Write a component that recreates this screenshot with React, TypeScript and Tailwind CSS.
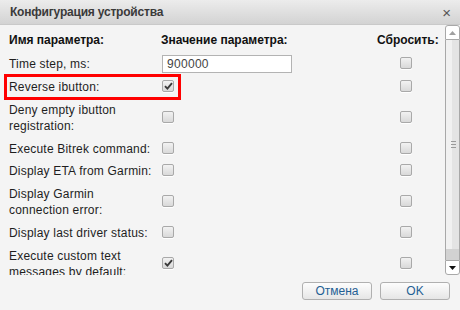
import React from "react";

type Row = { label: string; value?: string; checked?: boolean; marked?: boolean };

const rows: Row[] = [
	{ label: "Time step, ms:", value: "900000" },
	{ label: "Reverse ibutton:", checked: true, marked: true },
	{ label: "Deny empty ibutton\nregistration:" },
	{ label: "Execute Bitrek command:" },
	{ label: "Display ETA from Garmin:" },
	{ label: "Display Garmin\nconnection error:" },
	{ label: "Display last driver status:" },
	{ label: "Execute custom text\nmessages by default:", checked: true },
];

function Check({ checked }: { checked?: boolean }) {
	return (
		<span className="relative -top-[1px] flex h-[12px] w-[12px] items-center justify-center rounded-[2px] border border-[#a9a9a9] bg-gradient-to-b from-[#f2f2f2] to-[#d9d9d9] shadow-[0_1px_0_#fff]">
			{checked && (
				<svg width="9" height="8" viewBox="0 0 9 8">
					<path d="M1 4.2 L3.4 6.6 L8 1.2" fill="none" stroke="#3a3a3a" strokeWidth="1.9" />
				</svg>
			)}
		</span>
	);
}

export default function App() {
	return (
		<div className="flex h-[310px] w-[460px] flex-col overflow-hidden bg-[#f4f4f4] font-['Liberation_Sans',Arial,sans-serif] text-[12px] text-[#1e1e1e]">
			<div className="flex h-[25px] shrink-0 items-center justify-between border-b border-[#c9c9c9] bg-gradient-to-b from-[#ececec] to-[#d3d3d3] pl-[10px] pr-[9px]">
				<span className="font-bold tracking-[-0.2px] text-[#3a3a3a]">Конфигурация устройства</span>
				<span className="text-[15px] leading-none text-[#555]">×</span>
			</div>

			<div className="flex h-[250px] shrink-0">
				<div className="w-[445px] overflow-hidden">
					<div className="grid grid-cols-[152px_216px_58px] pl-[9px] pt-[7px] pb-[4px] font-bold leading-[16px] text-[#111]">
						<span>Имя параметра:</span>
						<span>Значение параметра:</span>
						<span className="text-center">Сбросить:</span>
					</div>
					{rows.map((r) => (
						<div
							key={r.label}
							className={
								"relative grid grid-cols-[152px_216px_58px] items-center pl-[9px] leading-[16px] " +
								(r.label.includes("\n") ? "py-[4px]" : "py-[3px]")
							}
						>
							<span className="whitespace-pre-line tracking-[0.2px]">{r.label}</span>
							<div className="flex items-center pl-[1px]">
								{r.value !== undefined ? (
									<div className="flex h-[18px] w-[130px] items-center border border-[#b3b3b3] bg-white px-[4px] tracking-[0.3px] text-[#444]">
										{r.value}
									</div>
								) : (
									<Check checked={r.checked} />
								)}
							</div>
							<div className="flex justify-center">
								<Check />
							</div>
							{r.marked && (
								<div className="absolute left-[4px] top-[-2px] h-[26px] w-[177px] border-[3px] border-[#ff0000]" />
							)}
						</div>
					))}
				</div>

				<div className="flex w-[15px] flex-col">
					<div className="flex h-[15px] items-center justify-center rounded-t-[3px] border border-[#a8a8a8] bg-white">
						<svg width="7" height="4" viewBox="0 0 7 4">
							<path d="M0 4 L3.5 0 L7 4 Z" fill="#a0a0a0" />
						</svg>
					</div>
					<div className="flex flex-1 border-x border-[#a8a8a8]">
						<div className="w-[6px] bg-[#f1f1f1]" />
						<div className="flex flex-1 items-center justify-center bg-[#e4e4e4]">
							<div className="ml-[-4px] flex flex-col gap-[2px]">
								<span className="h-[1px] w-[5px] bg-[#9a9a9a]" />
								<span className="h-[1px] w-[5px] bg-[#9a9a9a]" />
								<span className="h-[1px] w-[5px] bg-[#9a9a9a]" />
							</div>
						</div>
					</div>
					<div className="h-[11px] border-x border-[#a8a8a8] bg-[#d2d2d2]" />
					<div className="flex h-[15px] items-center justify-center rounded-b-[3px] border border-[#a8a8a8] bg-white">
						<svg width="7" height="4" viewBox="0 0 7 4">
							<path d="M0 0 L7 0 L3.5 4 Z" fill="#111" />
						</svg>
					</div>
				</div>
			</div>

			<div className="flex justify-end gap-[8px] pr-[10px] pt-[7px]">
				<button className="h-[18px] w-[70px] rounded-[3px] border border-[#b0b0b0] bg-gradient-to-b from-[#fdfdfd] to-[#e6e6e6] text-[12px] leading-none text-[#1f5f94]">
					Отмена
				</button>
				<button className="h-[18px] w-[70px] rounded-[3px] border border-[#b0b0b0] bg-gradient-to-b from-[#fdfdfd] to-[#e6e6e6] text-[12px] leading-none text-[#1f5f94]">
					OK
				</button>
			</div>
		</div>
	);
}
